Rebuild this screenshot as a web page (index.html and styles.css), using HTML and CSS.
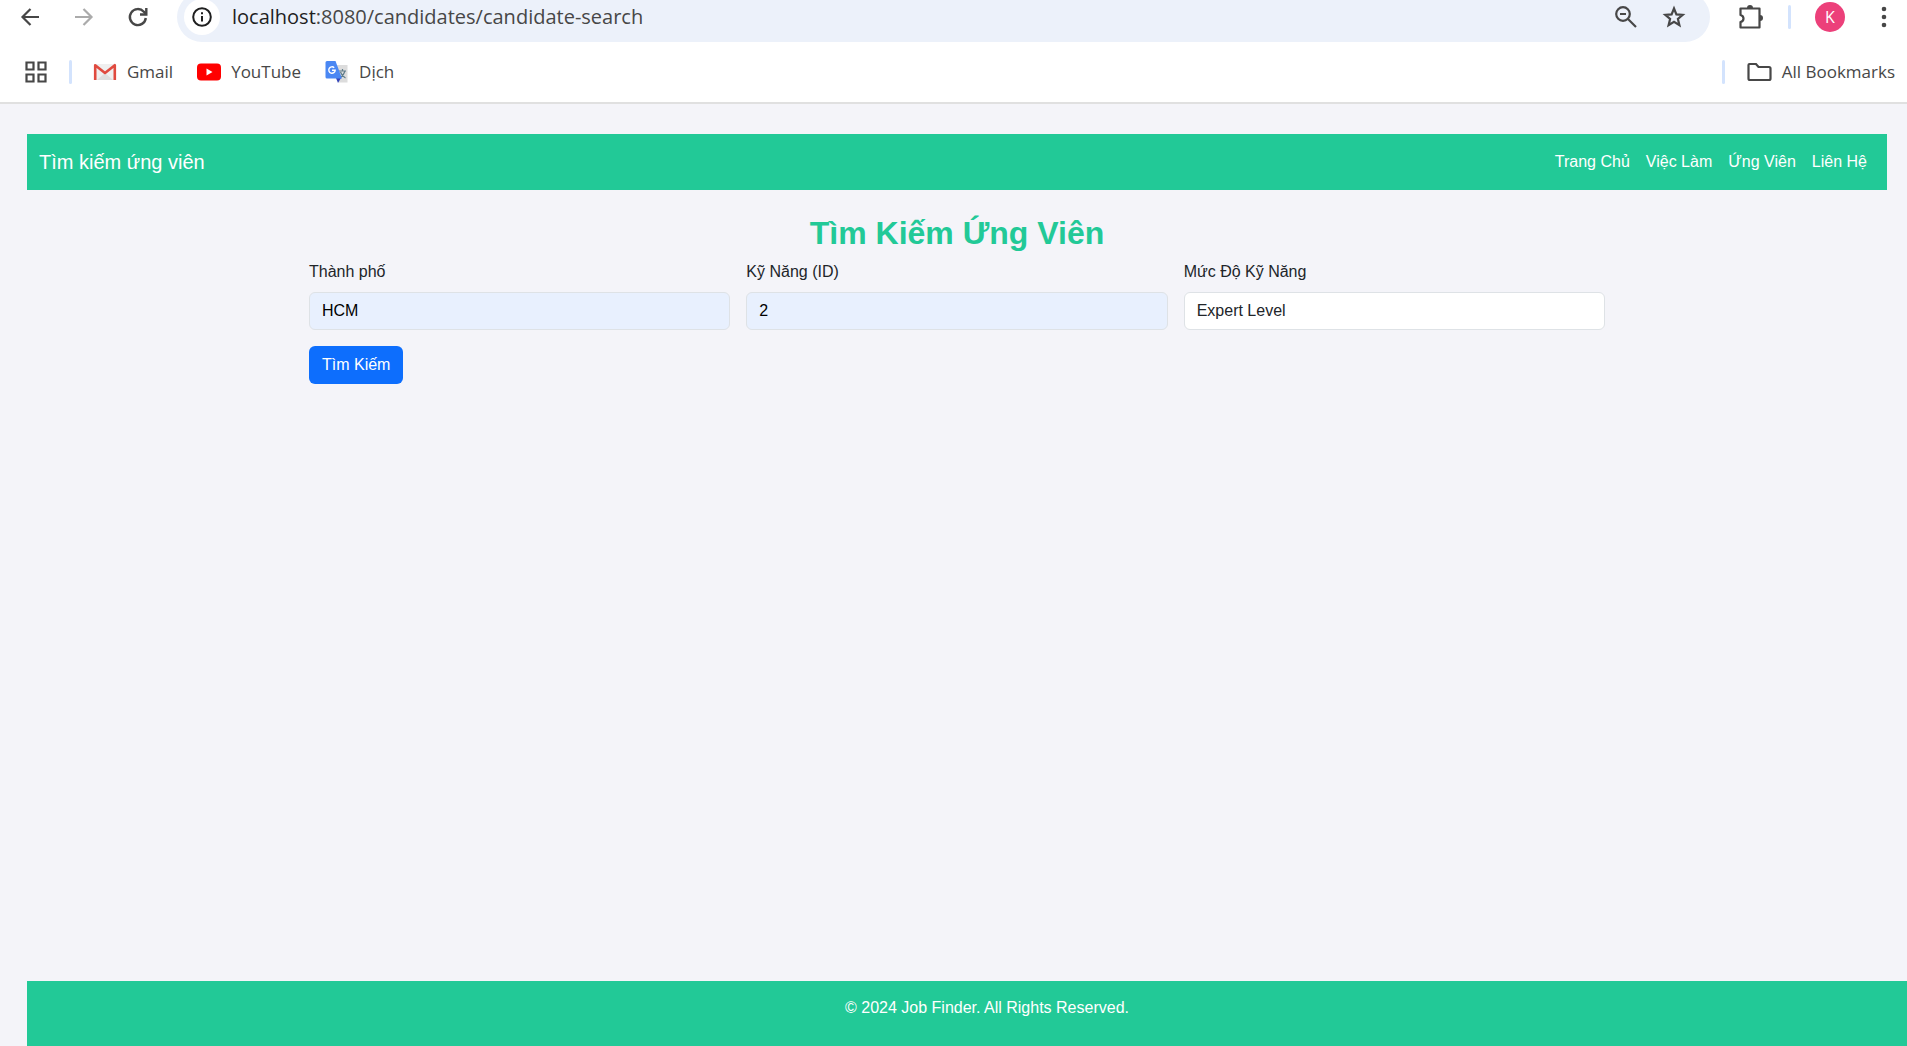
FILE: index.html
```html
<!DOCTYPE html>
<html lang="vi">
<head>
<meta charset="utf-8">
<meta name="viewport" content="width=device-width, initial-scale=1">
<title>Tìm kiếm ứng viên</title>
<link rel="stylesheet" href="styles.css">
</head>
<body>
<header class="browser">
  <div class="toolbar">
    <div class="toolbar-row">
      <div class="history">
        <button class="icon-btn" type="button" aria-label="Back"><svg width="24" height="24" viewBox="0 0 24 24" fill="none" stroke="#474747" stroke-width="2.200"><path d="M21 12H5M12.500 4 4.500 12l8 8"/></svg></button>
        <button class="icon-btn" type="button" aria-label="Forward"><svg width="24" height="24" viewBox="0 0 24 24" fill="none" stroke="#ababab" stroke-width="2.200"><path d="M3 12h16M11.500 4l8 8-8 8"/></svg></button>
        <button class="icon-btn" type="button" aria-label="Reload"><svg width="24" height="24" viewBox="0 0 24 24" fill="none" stroke="#474747" stroke-width="2.400"><path d="M19.800 13a8 8 0 1 1-2-6.300L20 9"/><path d="M20.300 3v6.500H14"/></svg></button>
      </div>
      <div class="omnibox">
        <button class="site-info" type="button" aria-label="Site information"><svg width="22" height="22" viewBox="0 0 22 22" fill="none" stroke="#1f1f1f" stroke-width="2"><circle cx="11" cy="11" r="8.800"/><path d="M11 10v5.500M11 6.300v2"/></svg></button>
        <div class="url"><span class="url-host">localhost</span>:8080/candidates/candidate-search</div>
        <button class="icon-btn" type="button" aria-label="Zoom"><svg width="24" height="24" viewBox="0 0 24 24" fill="none" stroke="#474747" stroke-width="2.200"><circle cx="9" cy="9" r="6.800"/><path d="M14 14l8 8M6 9h6"/></svg></button>
        <button class="icon-btn" type="button" aria-label="Bookmark this tab"><svg width="24" height="24" viewBox="0 0 24 24" fill="none" stroke="#474747" stroke-width="2.200"><path d="M12 3.500l2.400 5.900 6.300.5-4.800 4.100 1.500 6.200-5.400-3.300-5.400 3.300 1.500-6.200-4.800-4.100 6.300-.5z"/></svg></button>
      </div>
      <div class="actions">
        <button class="icon-btn" type="button" aria-label="Extensions"><svg width="26" height="26" viewBox="0 0 26 26"><path d="M2.500 4.500h19v19h-19v-5.500c4-1 4-6 0-7z" fill="none" stroke="#474747" stroke-width="2.200" stroke-linejoin="round"/><path d="M9 4a3 3 0 0 1 6 0zM22 11a3 3 0 0 1 0 6z" fill="#474747"/></svg></button>
        <span class="divider"></span>
        <button class="avatar" type="button">K</button>
        <button class="icon-btn menu" type="button" aria-label="Menu"><svg width="24" height="24" viewBox="0 0 24 24" fill="#474747"><circle cx="12" cy="4" r="2.300"/><circle cx="12" cy="12" r="2.300"/><circle cx="12" cy="20" r="2.300"/></svg></button>
      </div>
    </div>
  </div>
  <nav class="bookmarks" aria-label="Bookmarks">
    <button class="icon-btn" type="button" aria-label="Apps"><svg width="24" height="24" viewBox="0 0 24 24" fill="none" stroke="#474747" stroke-width="2.200"><path d="M2.500 2.500h7v7h-7zM14.500 2.500h7v7h-7zM2.500 14.500h7v7h-7zM14.500 14.500h7v7h-7z"/></svg></button>
    <span class="divider"></span>
    <a class="bookmark" href="#"><svg width="24" height="24" viewBox="0 0 24 24"><path d="M2 4h20v16H2z" fill="#efefef"/><path d="M4 20l8-7 8 7z" fill="#dedede"/><path d="M2.200 20V5.200L12 13l9.800-7.800V20" fill="none" stroke="#e04a3f" stroke-width="2.600" stroke-linejoin="round"/></svg>Gmail</a>
    <a class="bookmark" href="#"><svg width="24" height="24" viewBox="0 0 24 24"><rect y="3.500" width="24" height="17" rx="4" fill="#f00"/><path d="M9.500 8.500v7l6-3.500z" fill="#fff"/></svg>YouTube</a>
    <a class="bookmark" href="#"><svg width="24" height="24" viewBox="0 0 24 24"><path d="M9 5h13.500v17.500H14z" fill="#dcdcdc"/><path d="M14 11h7M17.500 9v2M20 11c-1 4-3 5.500-5 7M15.500 12c1 3 3 5 5 6" fill="none" stroke="#607d8b" stroke-width="1.200"/><path d="M11 18h5l-3 5z" fill="#3344b8"/><path d="M2 1h8.500L17 18.500H2a1.500 1.500 0 0 1-1.500-1.500V2.500A1.500 1.500 0 0 1 2 1z" fill="#4a87f3"/><path d="M9.200 7.700a3.200 3.200 0 1 0 1 2.500H7" fill="none" stroke="#fff" stroke-width="1.400"/></svg>Dịch</a>
    <span class="divider push"></span>
    <a class="bookmark all" href="#"><svg width="26" height="24" viewBox="0 0 26 24"><path d="M3.500 4h6.500l2.500 3H23a1.500 1.500 0 0 1 1.500 1.500v10A1.500 1.500 0 0 1 23 20H4a1.500 1.500 0 0 1-1.500-1.500V5a1 1 0 0 1 1-1z" fill="none" stroke="#474747" stroke-width="2.200"/></svg>All Bookmarks</a>
  </nav>
</header>
<div class="page">
  <nav class="navbar">
    <a class="brand" href="#">Tìm kiếm ứng viên</a>
    <div class="nav-links">
      <a href="#">Trang Chủ</a>
      <a href="#">Việc Làm</a>
      <a href="#">Ứng Viên</a>
      <a href="#">Liên Hệ</a>
    </div>
  </nav>
  <main class="container">
    <h1>Tìm Kiếm Ứng Viên</h1>
    <form>
      <div class="fields">
        <div class="field">
          <label for="city">Thành phố</label>
          <input class="control filled" id="city" type="text" value="HCM">
        </div>
        <div class="field">
          <label for="skill">Kỹ Năng (ID)</label>
          <input class="control filled" id="skill" type="text" value="2">
        </div>
        <div class="field">
          <label for="level">Mức Độ Kỹ Năng</label>
          <select class="control" id="level"><option>Expert Level</option></select>
        </div>
      </div>
      <button class="submit" type="submit">Tìm Kiếm</button>
    </form>
  </main>
</div>
<footer class="footer">© 2024 Job Finder. All Rights Reserved.</footer>
</body>
</html>
```
FILE: styles.css
```css
* { box-sizing: border-box; }

body {
  margin: 0;
  min-height: 100vh;
  display: flex;
  flex-direction: column;
  background: #f4f4f9;
  color: #212529;
  font: 16px/24px "Liberation Sans", Arial, sans-serif;
}

a { color: inherit; text-decoration: none; }
svg { display: block; flex: none; }
button { border: 0; padding: 0; font: inherit; }

/* Browser bars */
.browser {
  background: #fff;
  border-bottom: 2px solid #e0e0e0;
  color: #474747;
  font-family: "Open Sans", "Noto Sans", sans-serif;
}
.toolbar {
  height: 42px;
  display: flex;
  align-items: flex-end;
  overflow: hidden;
}
.toolbar-row {
  flex: 1;
  height: 50px;
  display: flex;
  align-items: center;
  padding: 0 11px 0 18px;
}
.icon-btn { background: none; flex: none; }
.history { display: flex; gap: 30px; width: 159px; }
.omnibox {
  flex: 1;
  height: 50px;
  display: flex;
  align-items: center;
  gap: 24px;
  padding: 0 24px 0 7px;
  border-radius: 25px;
  background: #ecf1fa;
}
.site-info {
  display: grid;
  place-items: center;
  width: 36px;
  height: 36px;
  border-radius: 50%;
  background: #fff;
}
.url { flex: 1; margin-left: -12px; font-size: 20px; line-height: 28px; }
.url-host { color: #1f1f1f; }
.actions { display: flex; align-items: center; gap: 24px; padding-left: 28px; }
.divider { width: 3px; height: 24px; border-radius: 2px; background: #d3e3fd; }
.avatar {
  width: 30px;
  height: 30px;
  border-radius: 50%;
  background: #ec407a;
  color: #fff;
  font-size: 16px;
  line-height: 30px;
}
.menu { margin-left: 3px; }
.bookmarks {
  height: 60px;
  display: flex;
  align-items: center;
  padding: 0 12px 0 24px;
  font-size: 17px;
}
.bookmarks .divider { margin: 0 21px; }
.bookmarks .push { margin-left: auto; }
.bookmark { display: flex; align-items: center; gap: 10px; margin-right: 24px; }
.all { margin-right: 0; }

/* Page */
.page { flex: 1; padding: 30px 20px 20px 27px; }
.navbar {
  display: flex;
  align-items: center;
  justify-content: space-between;
  min-height: 56px;
  padding: 0 20px 0 12px;
  background: #22c997;
  color: #fff;
}
.brand { font-size: 20px; }
.nav-links { display: flex; gap: 16px; }
.container { max-width: 1320px; margin: 24px auto 0; padding: 0 12px; }
h1 {
  margin: 0 0 8px;
  color: #22c997;
  font-size: 32px;
  line-height: 38px;
  text-align: center;
}
.fields { display: grid; grid-template-columns: repeat(3, 1fr); gap: 16px; }
.field { display: flex; flex-direction: column; gap: 8px; }
.control {
  appearance: none;
  width: 100%;
  height: 38px;
  padding: 6px 12px;
  border: 1px solid #dee2e6;
  border-radius: 6px;
  background: #fff;
  color: #212529;
  font: inherit;
}
.filled { background: #e8f0fe; color: #000; }
.submit {
  height: 38px;
  margin-top: 16px;
  padding: 0 13px;
  border-radius: 6px;
  background: #0d6efd;
  color: #fff;
}
.footer {
  margin-left: 27px;
  padding: 15px 0 26px 40px;
  background: #22c997;
  color: #fff;
  text-align: center;
}
```
